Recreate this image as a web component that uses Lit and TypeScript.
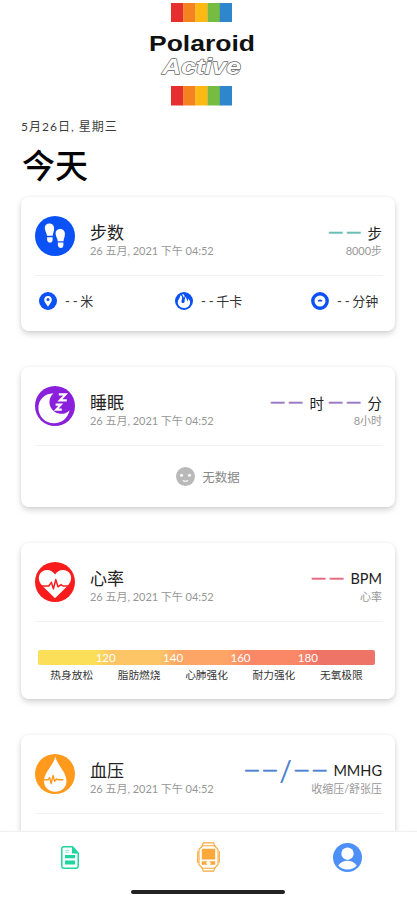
import { LitElement, html, css, svg, TemplateResult } from "lit";
import { customElement } from "lit/decorators.js";

const STRIPES = ["#e62e2e", "#f58220", "#fdb913", "#76bc43", "#2e86cc"];

const stripes = () => svg`<svg class="stripes" viewBox="0 0 61 19.5" preserveAspectRatio="none">
  ${STRIPES.map((c, i) => svg`<rect x=${i * 12.2} y="0" width="12.4" height="19.5" fill=${c} />`)}
</svg>`;

const shoe = (x: number, y: number) => svg`<g transform="translate(${x} ${y})" fill="#fff">
  <path d="M0 4.5C0 1.6 1.9 0 4.6 0C7.6 0 9.4 2.2 9.3 5.2C9.2 8 8.2 9.4 7.9 12.2H2.2C2 9.2 0 7.6 0 4.5Z" />
  <path d="M2.3 13.6H7.8V15.8C7.8 18 6.8 19 5.2 19C3.4 19 2.3 17.8 2.3 15.8Z" />
</g>`;

const icons: Record<string, TemplateResult> = {
  steps: html`<svg class="badge" viewBox="0 0 40 40"><circle cx="20" cy="20" r="20" fill="#0a52f5" />${shoe(9.8, 7.6)}${shoe(20.6, 13)}</svg>`,
  sleep: html`<svg class="badge" viewBox="0 0 40 40"><circle cx="20" cy="20" r="20" fill="#8a1fdc" />
    <path d="M18.5 7.2C9 7.6 3.4 14 3.4 21.7C3.4 30.4 10 37.2 19 37.2C27 37.2 32.8 32 34.6 24.2C31 28.4 24.6 29 19.6 25.8C12.8 21 13 12 18.5 7.2Z" fill="#fff" />
    <path d="M23.8 8.4H30.6L24.8 14.4H31.8M20.6 18.6H25.8L21.2 23.6H26.8" fill="none" stroke="#fff" stroke-width="2.1" /></svg>`,
  heart: html`<svg class="badge" viewBox="0 0 40 40"><circle cx="20" cy="20" r="20" fill="#fa1c1c" />
    <path d="M20 36.2L7 23.5C2.5 18.5 2.9 12 7.5 9.2C12 6.5 17.5 8.2 20 12.5C22.5 8.2 28 6.5 32.5 9.2C37.1 12 37.5 18.5 33 23.5Z" fill="#fff" />
    <path d="M4 24H13.8L16.4 20.4L18.4 26.8L20.8 17.6L23 24.8L26 22.6L28 24H36" fill="none" stroke="#fa1c1c" stroke-width="1.5" stroke-linejoin="round" /></svg>`,
  blood: html`<svg class="badge" viewBox="0 0 40 40"><circle cx="20" cy="20" r="20" fill="#ff9a1c" />
    <path d="M20.4 2.6C22 11 31.5 18 31.5 27C31.5 33.5 26.7 37.8 20.3 37.8C13.9 37.8 9 33.5 9 27C9 18 18.8 11 20.4 2.6Z" fill="#fff" />
    <path d="M8 25.8H13.2L14.6 23.6L16.2 29.5L18 21.4L19.6 27.4L21.4 25L23.2 25.8H28.4" fill="none" stroke="#ff9a1c" stroke-width="1.4" stroke-linejoin="round" /></svg>`,
  pin: html`<svg class="mini" viewBox="0 0 18 18"><circle cx="9" cy="9" r="9" fill="#0a52f5" />
    <path d="M9 14.7C7.2 12 5.2 10 5.2 7.7A3.8 3.8 0 0 1 12.8 7.7C12.8 10 10.8 12 9 14.7Z" fill="#fff" /><circle cx="9" cy="7.6" r="1.5" fill="#0a52f5" /></svg>`,
  flame: html`<svg class="mini" viewBox="0 0 18 18"><circle cx="9" cy="9" r="9" fill="#0a52f5" />
    <path d="M5.4 3.2C7.6 4 7.4 6.4 6.6 8.4C6 10.2 7.2 11.4 8.6 11C10.6 10.4 8.8 8 10.8 4.6C11 6.6 12.2 7.4 12.4 9.4C13.2 8.6 13.2 7.4 13 6.4C14.8 8 15.6 9.8 14.9 12C14.1 14.8 11.7 16 9 15.9C5.4 15.8 2.8 13.6 2.8 10.2C2.8 7.4 5.4 5.8 5.4 3.2Z" fill="#fff" />
    <path d="M7.4 2.4C9 3 9.2 4.2 8.8 5.4" fill="none" stroke="#fff" stroke-width="1.1" /></svg>`,
  clock: html`<svg class="mini" viewBox="0 0 18 18"><circle cx="9" cy="9" r="7.2" fill="#fff" stroke="#0a52f5" stroke-width="3.4" />
    <path d="M6.9 8.7H11.2M9 7.4V9.4" fill="none" stroke="#0a52f5" stroke-width="1.4" /></svg>`,
  face: html`<svg class="face" viewBox="0 0 20 20"><circle cx="10" cy="10" r="10" fill="#b9b9b9" />
    <circle cx="5.8" cy="8.7" r="1.6" fill="#fff" /><circle cx="14.2" cy="8.7" r="1.6" fill="#fff" />
    <path d="M7.2 14.2Q10 15.8 12.8 14.2" fill="none" stroke="#fff" stroke-width="1.2" /></svg>`,
  doc: html`<svg class="doc" viewBox="0 0 18 23"><path d="M3 .8H11.5L17.2 7V20Q17.2 22.2 15 22.2H3Q.8 22.2 .8 20V3Q.8 .8 3 .8Z" fill="#fff" stroke="#1fd6a0" stroke-width="1.5" />
    <path d="M11 .5V7.4H17.6Z" fill="#1fd6a0" /><path d="M4 9H14V12.2H4ZM4 14.6H14V18.6H4Z" fill="#1fd6a0" /><path d="M4.2 4.4H8M4.2 6.3H8" stroke="#8debcf" stroke-width=".9" /></svg>`,
  watch: html`<svg class="watch" viewBox="0 0 23 30"><g fill="none" stroke="#fca83a" stroke-width="1.1">
    <path d="M4.8 4.5L6.4 .9H16.6L18.2 4.5M4.8 25.5L6.4 29.1H16.6L18.2 25.5" />
    <path d="M5.5 3.8H17.5L21 7.3V22.7L17.5 26.2H5.5L2 22.7V7.3Z" /><path d="M.7 9V21M22.3 9V21" /></g>
    <path d="M4.8 6.8H18.2V17.6H4.8ZM4.8 19.2H10.6L9 20.8L10.4 22.8H4.8ZM12 19.2H18.2V22.8H12.6L14 20.9Z" fill="#fca83a" /></svg>`,
  user: html`<svg class="user" viewBox="0 0 29 29"><circle cx="14.5" cy="14.5" r="14.5" fill="#4b8ff7" />
    <circle cx="14.5" cy="10.7" r="6.2" fill="#fff" /><path d="M5.2 22.6C7.5 19.3 10.5 17.8 14.5 17.8C18.5 17.8 21.5 19.3 23.8 22.6C21.5 25.3 18.4 26.6 14.5 26.6C10.6 26.6 7.5 25.3 5.2 22.6Z" fill="#fff" /></svg>`,
};

const ZONES = ["热身放松", "脂肪燃烧", "心肺强化", "耐力强化", "无氧极限"];

@customElement("app-root")
export class AppRoot extends LitElement {
  static styles = css`
    * { box-sizing: border-box; }
    :host { display: flex; flex-direction: column; height: 900px; overflow: hidden; background: #fff; color: #222;
      font-family: Lato, "Noto Sans CJK SC", sans-serif; white-space: nowrap; }
    svg { display: block; flex: none; }
    .scroll { flex: 1; min-height: 0; overflow: hidden; }
    .brand { height: 107px; padding-top: 2.5px; display: flex; flex-direction: column; align-items: center; padding-right: 14px; }
    .stripes { width: 61px; height: 19.5px; }
    .logo { width: 108px; height: 64px; }
    .outline { paint-order: stroke; }
    .date { margin: 11px 0 0 21px; height: 18px; line-height: 18px; font-size: 12px; color: #3c3c3c; letter-spacing: 1px; }
    h1 { margin: 11px 0 0 22px; height: 36px; line-height: 36px; font-size: 33px; font-weight: 500; color: #000; }
    .cards { margin: 14px 22px 0 21px; display: flex; flex-direction: column; gap: 36px; }
    .card { height: 134px; padding: 0 12px 0 14px; border-radius: 8px; background: #fff;
      box-shadow: 0 3px 6px rgba(0,0,0,.17), 0 0 3px rgba(0,0,0,.06); }
    .tall { height: 140px; }
    .zoned { height: 156px; }
    .head { height: 79px; display: flex; align-items: flex-start; padding-top: 19px; border-bottom: 1px solid #f1f1f1; }
    .badge { width: 40px; height: 40px; }
    .names { margin-left: 15px; padding-top: 6px; flex: 1; }
    .title { height: 22px; line-height: 22px; font-size: 17px; }
    .sub { height: 14px; line-height: 14px; font-size: 11px; color: #979797; letter-spacing: -.03px; }
    .right { padding: 6px 1px 0 0; text-align: right; }
    .value { display: flex; height: 20px; align-items: center; justify-content: flex-end; font-size: 14.5px; }
    .right .sub { margin-top: 2px; }
    .dash { font: bold 13.3px/20px "Liberation Sans", sans-serif; -webkit-text-stroke: .5px currentColor; letter-spacing: 4.7px; margin-right: 2.5px; }
    .dash.close { margin-right: -2px; }
    .slash { font: 28px/20px Lato, sans-serif; margin-right: 3px; }
    .hour { margin-right: 5px; }
    .teal { color: #67bfb2; } .violet { color: #9b79c6; } .rose { color: #e66a80; } .blue { color: #4c82cf; }
    .metrics { display: grid; grid-template-columns: 136px 136px auto; height: 49px; align-items: center; padding-left: 4px; font-size: 13px; color: #333; }
    .metric { display: flex; align-items: center; }
    .mini { width: 18px; height: 18px; margin: 1px 8px 0 0; }
    .small { letter-spacing: 2.8px; }
    .empty { display: flex; align-items: center; justify-content: center; gap: 7px; height: 61px; font-size: 12.5px; color: #888; padding-right: 2px; }
    .face { width: 19px; height: 19px; }
    .bar { margin: 28px 8px 0 3px; height: 15px; border-radius: 2px; display: flex; padding-left: 34px; align-items: center; color: #fff; font-size: 11.5px;
      background: linear-gradient(90deg, #fbdf59 0 17%, #fdc565 22% 36%, #fda566 42% 56%, #fa8866 62% 77%, #ef7468 83%); }
    .tick { width: 67.4px; text-align: center; }
    .zones { margin: 2px 8px 0 3px; display: flex; line-height: 16px; font-size: 10.7px; color: #333; }
    .zone { flex: 1; text-align: center; }
    .nav { height: 69px; flex: none; position: relative; background: #fff; border-top: 1px solid #f0f0f0; display: grid; grid-template-columns: repeat(3, 139px); justify-items: center; align-items: start; }
    .doc { width: 18px; height: 23px; margin-top: 14px; }
    .watch { width: 23px; height: 30px; margin-top: 10px; }
    .user { width: 29px; height: 29px; margin-top: 11px; }
    .home { position: absolute; left: 131px; bottom: 6px; width: 154px; height: 4px; border-radius: 2px; background: #222; }
  `;

  private card(kind: string, icon: string, title: string, value: TemplateResult, note: string, body: TemplateResult | string) {
    return html`<section class="card ${kind}">
      <div class="head">${icons[icon]}
        <div class="names"><div class="title">${title}</div><div class="sub">26 五月, 2021 下午 04:52</div></div>
        <div class="right"><div class="value">${value}</div><div class="sub">${note}</div></div>
      </div>${body}</section>`;
  }

  private metric(icon: string, unit: string) {
    return html`<div class="metric">${icons[icon]}<span class="small">--</span><span>${unit}</span></div>`;
  }

  render() {
    return html`
      <div class="scroll">
        <div class="brand">${stripes()}
          <svg class="logo" viewBox="0 0 108 64">
            <text x="1" y="29" font-family="Liberation Sans" font-weight="700" font-size="21.5" textLength="106" lengthAdjust="spacingAndGlyphs" fill="#111">Polaroid</text>
            <text class="outline" x="14" y="52" font-family="Liberation Sans" font-weight="700" font-style="italic" font-size="22.5" textLength="79" lengthAdjust="spacingAndGlyphs" fill="#fff" stroke="#666" stroke-width="1.3" stroke-linejoin="round">Active</text>
          </svg>${stripes()}
        </div>
        <div class="date">5月26日, 星期三</div>
        <h1>今天</h1>
        <div class="cards">
          ${this.card("", "steps", "步数", html`<span class="dash teal">——</span>步`, "8000步",
            html`<div class="metrics">${this.metric("pin", "米")}${this.metric("flame", "千卡")}${this.metric("clock", "分钟")}</div>`)}
          ${this.card("tall", "sleep", "睡眠", html`<span class="dash violet">——</span><span class="hour">时</span><span class="dash violet">——</span>分`, "8小时",
            html`<div class="empty">${icons.face}<span>无数据</span></div>`)}
          ${this.card("zoned", "heart", "心率", html`<span class="dash rose">——</span>BPM`, "心率",
            html`<div class="bar">${[120, 140, 160, 180].map((n) => html`<span class="tick">${n}</span>`)}</div>
              <div class="zones">${ZONES.map((z) => html`<span class="zone">${z}</span>`)}</div>`)}
          ${this.card("zoned", "blood", "血压", html`<span class="dash close blue">——</span><span class="slash blue">/</span><span class="dash blue">——</span>MMHG`, "收缩压/舒张压", "")}
        </div>
      </div>
      <nav class="nav">${icons.doc}${icons.watch}${icons.user}<div class="home"></div></nav>`;
  }
}
